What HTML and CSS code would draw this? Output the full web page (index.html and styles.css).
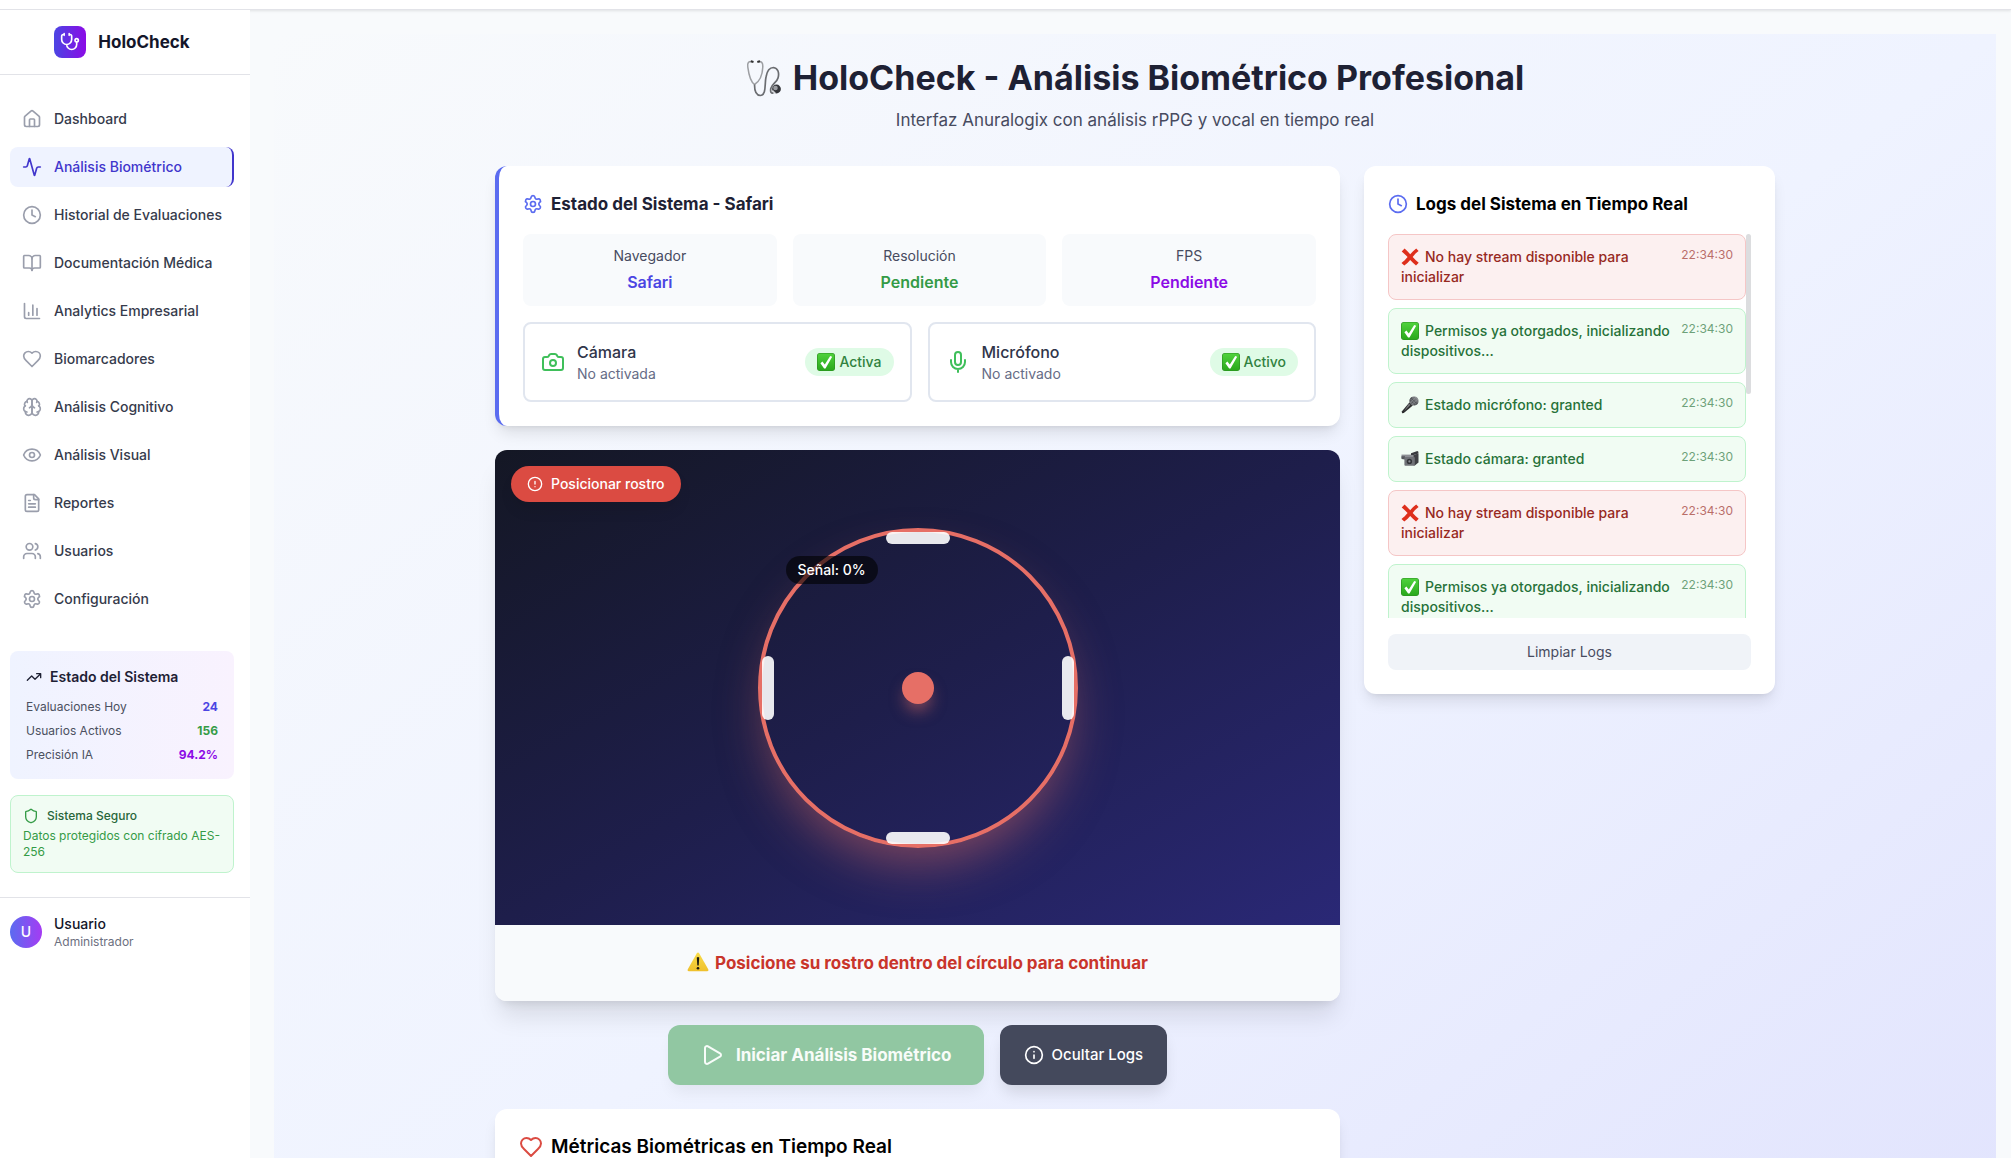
FILE: index.html
```html
<!DOCTYPE html>
<html lang="es">
<head>
<meta charset="utf-8">
<meta name="viewport" content="width=device-width, initial-scale=1">
<title>HoloCheck - Análisis Biométrico Profesional</title>
<link rel="stylesheet" href="styles.css">
</head>
<body>
<svg class="sprite" aria-hidden="true">
  <symbol id="i-steth" viewBox="0 0 24 24"><path d="M11 2v2M5 2v2M5 3H4a2 2 0 0 0-2 2v4a6 6 0 0 0 12 0V5a2 2 0 0 0-2-2h-1M8 15a6 6 0 0 0 12 0v-3"/><circle cx="20" cy="10" r="2"/></symbol>
  <symbol id="i-home" viewBox="0 0 24 24"><path d="M15 21v-8a1 1 0 0 0-1-1h-4a1 1 0 0 0-1 1v8"/><path d="M3 10a2 2 0 0 1 .709-1.528l7-5.999a2 2 0 0 1 2.582 0l7 5.999A2 2 0 0 1 21 10v9a2 2 0 0 1-2 2H5a2 2 0 0 1-2-2z"/></symbol>
  <symbol id="i-activity" viewBox="0 0 24 24"><path d="M22 12h-2.48a2 2 0 0 0-1.93 1.46l-2.35 8.36a.25.25 0 0 1-.48 0L9.24 2.18a.25.25 0 0 0-.48 0l-2.35 8.36A2 2 0 0 1 4.49 12H2"/></symbol>
  <symbol id="i-clock" viewBox="0 0 24 24"><circle cx="12" cy="12" r="10"/><path d="M12 6v6l4 2"/></symbol>
  <symbol id="i-book" viewBox="0 0 24 24"><path d="M12 7v14"/><path d="M3 18a1 1 0 0 1-1-1V4a1 1 0 0 1 1-1h5a4 4 0 0 1 4 4 4 4 0 0 1 4-4h5a1 1 0 0 1 1 1v13a1 1 0 0 1-1 1h-6a3 3 0 0 0-3 3 3 3 0 0 0-3-3z"/></symbol>
  <symbol id="i-chart" viewBox="0 0 24 24"><path d="M3 3v16a2 2 0 0 0 2 2h16M18 17V9M13 17V5M8 17v-3"/></symbol>
  <symbol id="i-heart" viewBox="0 0 24 24"><path d="M19 14c1.49-1.46 3-3.21 3-5.5A5.5 5.5 0 0 0 16.5 3c-1.76 0-3 .5-4.5 2-1.5-1.5-2.74-2-4.5-2A5.5 5.5 0 0 0 2 8.5c0 2.3 1.5 4.05 3 5.5l7 7Z"/></symbol>
  <symbol id="i-brain" viewBox="0 0 24 24"><path d="M12 5a3 3 0 1 0-5.997.125 4 4 0 0 0-2.526 5.77 4 4 0 0 0 .556 6.588A4 4 0 1 0 12 18Z"/><path d="M12 5a3 3 0 1 1 5.997.125 4 4 0 0 1 2.526 5.77 4 4 0 0 1-.556 6.588A4 4 0 1 1 12 18Z"/><path d="M15 13a4.5 4.5 0 0 1-3-4 4.5 4.5 0 0 1-3 4M17.599 6.5a3 3 0 0 0 .399-1.375M6.003 5.125A3 3 0 0 0 6.401 6.5M3.477 10.896a4 4 0 0 1 .585-.396M19.938 10.5a4 4 0 0 1 .585.396M6 18a4 4 0 0 1-1.967-.516M19.967 17.484A4 4 0 0 1 18 18"/></symbol>
  <symbol id="i-eye" viewBox="0 0 24 24"><path d="M2.062 12.348a1 1 0 0 1 0-.696 10.75 10.75 0 0 1 19.876 0 1 1 0 0 1 0 .696 10.75 10.75 0 0 1-19.876 0"/><circle cx="12" cy="12" r="3"/></symbol>
  <symbol id="i-file" viewBox="0 0 24 24"><path d="M15 2H6a2 2 0 0 0-2 2v16a2 2 0 0 0 2 2h12a2 2 0 0 0 2-2V7Z"/><path d="M14 2v4a2 2 0 0 0 2 2h4M10 9H8M16 13H8M16 17H8"/></symbol>
  <symbol id="i-users" viewBox="0 0 24 24"><path d="M16 21v-2a4 4 0 0 0-4-4H6a4 4 0 0 0-4 4v2"/><circle cx="9" cy="7" r="4"/><path d="M22 21v-2a4 4 0 0 0-3-3.87M16 3.128a4 4 0 0 1 0 7.744"/></symbol>
  <symbol id="i-gear" viewBox="0 0 24 24"><path d="M9.671 4.136a2.34 2.34 0 0 1 4.659 0 2.34 2.34 0 0 0 3.319 1.915 2.34 2.34 0 0 1 2.33 4.033 2.34 2.34 0 0 0 0 3.831 2.34 2.34 0 0 1-2.33 4.033 2.34 2.34 0 0 0-3.319 1.915 2.34 2.34 0 0 1-4.659 0 2.34 2.34 0 0 0-3.32-1.915 2.34 2.34 0 0 1-2.33-4.033 2.34 2.34 0 0 0 0-3.831A2.34 2.34 0 0 1 6.35 6.051a2.34 2.34 0 0 0 3.319-1.915"/><circle cx="12" cy="12" r="3"/></symbol>
  <symbol id="i-trend" viewBox="0 0 24 24"><path d="M16 7h6v6M22 7l-8.500 8.500-5-5L2 17"/></symbol>
  <symbol id="i-shield" viewBox="0 0 24 24"><path d="M20 13c0 5-3.500 7.500-7.660 8.950a1 1 0 0 1-.67-.01C7.500 20.500 4 18 4 13V6a1 1 0 0 1 1-1c2 0 4.500-1.200 6.240-2.720a1.170 1.170 0 0 1 1.520 0C14.510 3.810 17 5 19 5a1 1 0 0 1 1 1z"/></symbol>
  <symbol id="i-camera" viewBox="0 0 24 24"><path d="M13.997 4a2 2 0 0 1 1.760 1.050l.486.900A2 2 0 0 0 18.003 7H20a2 2 0 0 1 2 2v9a2 2 0 0 1-2 2H4a2 2 0 0 1-2-2V9a2 2 0 0 1 2-2h1.997a2 2 0 0 0 1.759-1.048l.489-.904A2 2 0 0 1 10.004 4z"/><circle cx="12" cy="13" r="3"/></symbol>
  <symbol id="i-mic" viewBox="0 0 24 24"><path d="M12 19v3M19 10v2a7 7 0 0 1-14 0v-2"/><rect x="9" y="2" width="6" height="13" rx="3"/></symbol>
  <symbol id="i-alert" viewBox="0 0 24 24"><circle cx="12" cy="12" r="10"/><path d="M12 8v4M12 16h.01"/></symbol>
  <symbol id="i-info" viewBox="0 0 24 24"><circle cx="12" cy="12" r="10"/><path d="M12 16v-4M12 8h.01"/></symbol>
  <symbol id="i-play" viewBox="0 0 24 24"><path d="M5 5a2 2 0 0 1 3.008-1.728l11.997 6.998a2 2 0 0 1 .003 3.458l-12 7A2 2 0 0 1 5 19z"/></symbol>

  <linearGradient id="g-check" x1="0" y1="0" x2="0" y2="1"><stop offset="0" stop-color="#4fd23c"/><stop offset="1" stop-color="#2aa81c"/></linearGradient>
  <linearGradient id="g-warn" x1="0" y1="0" x2="0" y2="1"><stop offset="0" stop-color="#f8dc4a"/><stop offset="1" stop-color="#efc02c"/></linearGradient>
  <symbol id="e-check" viewBox="0 0 18 18"><rect width="18" height="18" rx="3" fill="#2b8f20"/><rect x=".6" y=".6" width="16.800" height="16.800" rx="2.600" fill="url(#g-check)"/><path d="M3.400 10.200L5.400 8.600L7.800 11.600L13.200 3L15.200 3.800L8.500 15.400H7.100Z" fill="#fff"/></symbol>
  <symbol id="e-cross" viewBox="0 0 18 18"><path d="M3.600.6C5.600 2.400 7.400 4.300 9.200 6.200C11 4.100 13 2.100 15.200.5L17.600 3C15.200 4.700 13.400 6.700 11.700 9C13.600 11 15.400 12.900 17.700 14.700L15 17.500C12.800 15.600 11 13.800 9.200 11.900C7.400 14 5.600 15.900 3.300 17.600L.5 15.100C2.900 13.300 4.800 11.300 6.600 9.100C4.800 7.100 2.900 5.200.7 3.500Z" fill="#de2f1c"/></symbol>
  <symbol id="e-mic" viewBox="0 0 18 18"><path d="M8.600 6.200L11.800 9.600L2.800 17L1 17.200L.8 15.600Z" fill="#2c2c2e"/><path d="M8 7.600L9.400 9L3 15.200Z" fill="#77787c"/><circle cx="13" cy="5" r="4.600" fill="#77797d"/><path d="M9.400 7.200a4.600 4.600 0 0 0 7.900-.4L10.800 1a4.600 4.600 0 0 0-1.400 6.200Z" fill="#55575b"/><path d="M11 1.600l5.600 5.200M9.600 3l5.600 5.600M14 .8l3 3M9 5.400l3.600 3.600M16.800 3l-6 5.600M15.200 1.200L9.200 6.800" stroke="#a2a4a8" stroke-width=".5"/></symbol>
  <symbol id="e-video" viewBox="0 0 18 18"><path d="M.5 4.600H13V8H.5Z" fill="#8d8f94"/><path d="M.5 6.200H4V9.600L.5 9Z" fill="#55575b"/><path d="M10 3.200L16.400 1l1 .8V3.400L12.600 5H10Z" fill="#3a3b3f"/><path d="M12.600 4.800L17.500 3.600V12.600L13.800 15.600H12.600Z" fill="#3f4044"/><rect x="3.400" y="7" width="10.400" height="8.800" rx="1" fill="#707277"/><circle cx="8.400" cy="11.400" r="2.700" fill="#333438"/><circle cx="8.400" cy="11.400" r="1.100" fill="#8b8d93"/></symbol>
  <symbol id="e-warn" viewBox="0 0 22 20"><path d="M9.700 1.500Q11-.4 12.300 1.500L21.200 17.200Q22 19.200 20 19.300H2Q0 19.200.8 17.200Z" fill="url(#g-warn)"/><path d="M9.800 5.600Q11 4.200 12.200 5.600L11.700 13.400H10.300Z" fill="#1c1a12"/><circle cx="11" cy="16.200" r="1.300" fill="#1c1a12"/></symbol>
  <symbol id="e-steth" viewBox="0 0 36 38"><path d="M6 2.500C2.500 2 1.200 4 1.800 8C2.600 14 3.500 22 8.500 25.500C14.500 22 16.500 14 16.800 8C17 4 15.500 2 12.500 2.500" fill="none" stroke="#9d9fa3" stroke-width="1.500"/><path d="M8.500 25.500C8.500 31 10 36.500 14.500 36.500C20.500 36 18.500 25 20 18C21 12 23.500 8.500 27.500 8.500C32 9 33.500 14 32 19C31 23 26 25 24.800 29.500C24.200 33 25 34.500 27.500 34" fill="none" stroke="#6b6d71" stroke-width="1.700"/><path d="M4.800 2.300l2.700.7M14 2.300l-2.700.7" stroke="#333" stroke-width="2.200"/><circle cx="30.500" cy="30" r="4.400" fill="#34353a"/><circle cx="29.500" cy="29" r="2.300" fill="#9a9ca1"/><path d="M26.500 31.500l3 3" stroke="#d0d2d6" stroke-width="1.200"/></symbol>
</svg>

<header class="topbar"></header>
<div class="shell">
  <aside class="sidebar">
    <div class="brand">
      <span class="brand-mark"><svg class="icon icon-20"><use href="#i-steth"/></svg></span>
      <span class="brand-name">HoloCheck</span>
    </div>
    <nav class="nav">
      <a class="nav-link" href="#dashboard"><svg class="icon icon-20"><use href="#i-home"/></svg>Dashboard</a>
      <a class="nav-link nav-link-active" href="#biometrico" aria-current="page"><svg class="icon icon-20"><use href="#i-activity"/></svg>Análisis Biométrico</a>
      <a class="nav-link" href="#historial"><svg class="icon icon-20"><use href="#i-clock"/></svg>Historial de Evaluaciones</a>
      <a class="nav-link" href="#documentacion"><svg class="icon icon-20"><use href="#i-book"/></svg>Documentación Médica</a>
      <a class="nav-link" href="#analytics"><svg class="icon icon-20"><use href="#i-chart"/></svg>Analytics Empresarial</a>
      <a class="nav-link" href="#biomarcadores"><svg class="icon icon-20"><use href="#i-heart"/></svg>Biomarcadores</a>
      <a class="nav-link" href="#cognitivo"><svg class="icon icon-20"><use href="#i-brain"/></svg>Análisis Cognitivo</a>
      <a class="nav-link" href="#visual"><svg class="icon icon-20"><use href="#i-eye"/></svg>Análisis Visual</a>
      <a class="nav-link" href="#reportes"><svg class="icon icon-20"><use href="#i-file"/></svg>Reportes</a>
      <a class="nav-link" href="#usuarios"><svg class="icon icon-20"><use href="#i-users"/></svg>Usuarios</a>
      <a class="nav-link" href="#configuracion"><svg class="icon icon-20"><use href="#i-gear"/></svg>Configuración</a>
    </nav>
    <section class="summary">
      <h2 class="summary-title"><svg class="icon icon-16"><use href="#i-trend"/></svg>Estado del Sistema</h2>
      <dl class="summary-list">
        <div class="summary-row"><dt>Evaluaciones Hoy</dt><dd class="indigo">24</dd></div>
        <div class="summary-row"><dt>Usuarios Activos</dt><dd class="green">156</dd></div>
        <div class="summary-row"><dt>Precisión IA</dt><dd class="purple">94.2%</dd></div>
      </dl>
    </section>
    <section class="secure">
      <h2 class="secure-title"><svg class="icon icon-16"><use href="#i-shield"/></svg>Sistema Seguro</h2>
      <p class="secure-text">Datos protegidos con cifrado AES-256</p>
    </section>
    <div class="user">
      <span class="avatar">U</span>
      <div>
        <p class="user-name">Usuario</p>
        <p class="user-role">Administrador</p>
      </div>
    </div>
  </aside>

  <main class="main">
    <div class="canvas">
      <header class="page-head">
        <h1 class="page-title"><svg class="emoji emoji-title"><use href="#e-steth"/></svg>HoloCheck - Análisis Biométrico Profesional</h1>
        <p class="page-sub">Interfaz Anuralogix con análisis rPPG y vocal en tiempo real</p>
      </header>
      <div class="columns">
        <div class="primary">
          <section class="card status-card">
            <h2 class="card-title"><svg class="icon icon-20 accent"><use href="#i-gear"/></svg>Estado del Sistema - Safari</h2>
            <div class="tiles">
              <div class="tile"><p class="tile-label">Navegador</p><p class="tile-value indigo">Safari</p></div>
              <div class="tile"><p class="tile-label">Resolución</p><p class="tile-value green">Pendiente</p></div>
              <div class="tile"><p class="tile-label">FPS</p><p class="tile-value purple">Pendiente</p></div>
            </div>
            <div class="devices">
              <div class="device">
                <svg class="icon icon-24 live"><use href="#i-camera"/></svg>
                <div class="device-text"><p class="device-name">Cámara</p><p class="device-state">No activada</p></div>
                <span class="chip"><svg class="emoji"><use href="#e-check"/></svg>Activa</span>
              </div>
              <div class="device">
                <svg class="icon icon-24 live"><use href="#i-mic"/></svg>
                <div class="device-text"><p class="device-name">Micrófono</p><p class="device-state">No activado</p></div>
                <span class="chip"><svg class="emoji"><use href="#e-check"/></svg>Activo</span>
              </div>
            </div>
          </section>

          <section class="card video-card">
            <div class="video">
              <span class="face-badge"><svg class="icon icon-16"><use href="#i-alert"/></svg>Posicionar rostro</span>
              <div class="ring">
                <span class="tick tick-top"></span>
                <span class="tick tick-bottom"></span>
                <span class="tick tick-left"></span>
                <span class="tick tick-right"></span>
                <span class="dot"></span>
                <span class="signal">Señal: 0%</span>
              </div>
            </div>
            <p class="notice"><svg class="emoji emoji-warn"><use href="#e-warn"/></svg>Posicione su rostro dentro del círculo para continuar</p>
          </section>

          <div class="actions">
            <button class="btn btn-start" type="button" disabled><svg class="icon icon-24"><use href="#i-play"/></svg>Iniciar Análisis Biométrico</button>
            <button class="btn btn-logs" type="button"><svg class="icon icon-20"><use href="#i-info"/></svg>Ocultar Logs</button>
          </div>

          <section class="card metrics-card">
            <h2 class="card-title metrics-title"><svg class="icon icon-24 red"><use href="#i-heart"/></svg>Métricas Biométricas en Tiempo Real</h2>
          </section>
        </div>

        <aside class="card logs-card">
          <h2 class="card-title black"><svg class="icon icon-20 accent"><use href="#i-clock"/></svg>Logs del Sistema en Tiempo Real</h2>
          <div class="log-frame">
            <ul class="log-list">
              <li class="log log-error"><p class="log-text"><svg class="emoji"><use href="#e-cross"/></svg>No hay stream disponible para inicializar</p><time class="log-time">22:34:30</time></li>
              <li class="log log-ok"><p class="log-text"><svg class="emoji"><use href="#e-check"/></svg>Permisos ya otorgados, inicializando dispositivos...</p><time class="log-time">22:34:30</time></li>
              <li class="log log-ok"><p class="log-text"><svg class="emoji"><use href="#e-mic"/></svg>Estado micrófono: granted</p><time class="log-time">22:34:30</time></li>
              <li class="log log-ok"><p class="log-text"><svg class="emoji"><use href="#e-video"/></svg>Estado cámara: granted</p><time class="log-time">22:34:30</time></li>
              <li class="log log-error"><p class="log-text"><svg class="emoji"><use href="#e-cross"/></svg>No hay stream disponible para inicializar</p><time class="log-time">22:34:30</time></li>
              <li class="log log-ok"><p class="log-text"><svg class="emoji"><use href="#e-check"/></svg>Permisos ya otorgados, inicializando dispositivos...</p><time class="log-time">22:34:30</time></li>
            </ul>
            <span class="log-thumb"></span>
          </div>
          <button class="btn-clear" type="button">Limpiar Logs</button>
        </aside>
      </div>
    </div>
  </main>
</div>
</body>
</html>
```

FILE: styles.css
```css
*, *::before, *::after { box-sizing: border-box; }
body, h1, h2, p, ul, dl, dd { margin: 0; padding: 0; }
ul { list-style: none; }
a { color: inherit; text-decoration: none; }
button { border: 0; font: inherit; cursor: pointer; }

body {
  display: flex;
  flex-direction: column;
  height: 100vh;
  overflow: hidden;
  background: #f8fafc;
  color: #1e2134;
  font-family: Inter, "Liberation Sans", sans-serif;
  font-size: 14px;
  line-height: 20px;
}

.sprite { position: absolute; width: 0; height: 0; }
.icon { flex: none; fill: none; stroke: currentColor; stroke-width: 2; stroke-linecap: round; stroke-linejoin: round; }
.icon-16 { width: 16px; height: 16px; }
.icon-20 { width: 20px; height: 20px; }
.icon-24 { width: 24px; height: 24px; }
.emoji { display: inline-block; width: 18px; height: 18px; margin-right: 6px; vertical-align: -4px; }

.indigo { color: #4b45e3; }
.green { color: #349b46; }
.purple { color: #8b0be6; }
.accent { color: #5b6cf0; }
.live { color: #3fbf5a; }
.red { color: #db4b42; }

.topbar { flex: none; height: 10px; background: #fff; border-bottom: 1px solid #e2e3e8; box-shadow: 0 1px 3px rgba(0, 0, 0, .1); }
.shell { display: flex; flex: 1; min-height: 0; }

/* Sidebar */
.sidebar { position: relative; flex: none; width: 250px; overflow-y: auto; background: #fff; }
.brand { display: flex; align-items: center; justify-content: center; gap: 12px; height: 65px; padding-right: 6px; border-bottom: 1px solid #e2e3e8; }
.brand-mark { display: grid; place-items: center; width: 32px; height: 32px; border-radius: 8px; background: linear-gradient(90deg, #4b45e3, #8b0be6); color: #fff; }
.brand-name { font-size: 17px; font-weight: 700; line-height: 28px; color: #14162a; }
.nav { display: flex; flex-direction: column; gap: 8px; padding: 24px 16px 32px 10px; }
.nav-link { display: flex; align-items: center; gap: 12px; height: 40px; padding: 0 12px; border-radius: 8px; color: #363b4c; font-size: 14px; font-weight: 500; white-space: nowrap; }
.nav-link .icon { color: #9a9eac; }
.nav-link-active { background: #eff3ff; border-right: 2px solid #4136cc; color: #4136cc; }
.nav-link-active .icon { color: #4136cc; }

.summary { margin: 0 16px 16px 10px; padding: 16px; border-radius: 8px; background: linear-gradient(90deg, #eff3ff, #f9f2fe); }
.summary-title { display: flex; align-items: center; gap: 8px; margin-bottom: 12px; font-size: 14px; font-weight: 600; line-height: 20px; }
.summary-list { display: flex; flex-direction: column; gap: 8px; font-size: 12px; line-height: 16px; }
.summary-row { display: flex; justify-content: space-between; }
.summary-row dt { color: #4b5060; }
.summary-row dd { font-weight: 700; }
.secure { margin: 0 16px 24px 10px; padding: 12px; border: 1px solid #bff3cd; border-radius: 8px; background: #f1fcf3; font-size: 12px; line-height: 16px; }
.secure-title { display: flex; align-items: center; gap: 8px; margin-bottom: 4px; color: #28663a; font-size: 12px; font-weight: 500; line-height: 16px; }
.secure-title .icon { color: #349b46; }
.secure-text { color: #349b46; }
.user { display: flex; align-items: center; gap: 12px; padding: 16px 10px; border-top: 1px solid #e2e3e8; }
.avatar { display: grid; place-items: center; width: 32px; height: 32px; border-radius: 50%; background: linear-gradient(90deg, #5b6cf0, #a53bf3); color: #fff; font-weight: 500; }
.user-name { color: #14162a; font-weight: 500; }
.user-role { color: #6c7080; font-size: 12px; line-height: 16px; }

/* Page */
.main { flex: 1; min-width: 0; overflow-y: auto; scrollbar-width: none; padding: 24px 15px 24px 24px; }
.canvas { padding: 24px; background: linear-gradient(to bottom right, #f8fafc, #eff3ff 50%, #e0e2fd); }
.page-head { margin-bottom: 32px; text-align: center; }
.page-title { margin-bottom: 8px; font-size: 34px; font-weight: 700; line-height: 40px; }
.emoji-title { width: 36px; height: 38px; margin-right: 11px; vertical-align: -7px; }
.page-sub { color: #474b60; font-size: 17px; line-height: 28px; }
.columns { display: grid; grid-template-columns: minmax(0, 845fr) minmax(0, 411fr); align-items: start; gap: 24px; max-width: 1280px; margin: 0 auto; }
.primary { display: flex; flex-direction: column; gap: 24px; }

.card { border-radius: 12px; background: #fff; padding: 24px; box-shadow: 0 10px 15px -3px rgba(0, 0, 0, .1), 0 4px 6px -4px rgba(0, 0, 0, .1); }
.card-title { display: flex; align-items: center; gap: 8px; margin-bottom: 16px; font-size: 17px; font-weight: 700; line-height: 28px; }
.black { color: #000; }

.status-card { border-left: 4px solid #5b6cf0; }
.tiles { display: grid; grid-template-columns: repeat(3, 1fr); gap: 16px; margin-bottom: 16px; }
.tile { padding: 12px; border-radius: 8px; background: #f8fafc; text-align: center; }
.tile-label { margin-bottom: 4px; color: #474b60; }
.tile-value { font-size: 16px; font-weight: 600; line-height: 24px; }
.devices { display: grid; grid-template-columns: repeat(2, 1fr); gap: 16px; }
.device { display: flex; align-items: center; gap: 12px; padding: 16px; border: 2px solid #e1e6ef; border-radius: 8px; }
.device-text { flex: 1; }
.device-name { color: #30354a; font-size: 16px; font-weight: 500; line-height: 24px; }
.device-state { color: #666c86; }
.chip { padding: 4px 12px; border-radius: 14px; background: #dffbe6; color: #318240; font-weight: 500; }
.chip .emoji { margin-right: 4px; }

.video-card { padding: 0; overflow: hidden; box-shadow: 0 20px 25px -5px rgba(0, 0, 0, .1), 0 8px 10px -6px rgba(0, 0, 0, .1); }
.video { position: relative; display: grid; place-items: center; aspect-ratio: 16 / 9; background: linear-gradient(to bottom right, #141724, #1e1e4b 50%, #2a2876); }
.face-badge { position: absolute; top: 16px; left: 16px; display: flex; align-items: center; gap: 8px; padding: 8px 16px; border-radius: 18px; background: #db4b42; color: #fff; font-weight: 500; box-shadow: 0 10px 15px -3px rgba(0, 0, 0, .1); }
.ring { position: relative; width: 320px; height: 320px; border: 4px solid #e66f66; border-radius: 50%; box-shadow: 0 25px 50px -12px rgba(230, 111, 102, .5); }
.tick { position: absolute; border-radius: 6px; background: rgba(255, 255, 255, .9); }
.tick-top, .tick-bottom { left: calc(50% - 32px); width: 64px; height: 12px; }
.tick-left, .tick-right { top: calc(50% - 32px); width: 12px; height: 64px; }
.tick-top { top: 0; }
.tick-bottom { bottom: 0; }
.tick-left { left: 0; }
.tick-right { right: 0; }
.dot { position: absolute; top: calc(50% - 16px); left: calc(50% - 16px); width: 32px; height: 32px; border-radius: 50%; background: #e66f66; box-shadow: 0 10px 15px -3px rgba(230, 111, 102, .5); }
.signal { position: absolute; top: 24px; left: 24px; padding: 4px 12px; border-radius: 14px; background: rgba(0, 0, 0, .6); color: #fff; font-weight: 500; white-space: nowrap; }
.notice { padding: 24px; background: #f8fafc; color: #c9352b; font-size: 17px; font-weight: 700; line-height: 28px; text-align: center; }
.emoji-warn { width: 22px; height: 20px; vertical-align: -3px; }

.actions { display: flex; justify-content: center; gap: 16px; }
.btn { display: flex; align-items: center; height: 60px; border-radius: 12px; color: #fff; }
.btn-start { gap: 12px; padding: 0 32px; background: #91c7a2; color: #f8fcf9; font-size: 17px; font-weight: 700; box-shadow: 0 10px 15px -3px rgba(0, 0, 0, .06); }
.btn-logs { gap: 8px; padding: 0 24px; background: #44495c; font-size: 15px; font-weight: 500; box-shadow: 0 10px 15px -3px rgba(0, 0, 0, .12); }
.metrics-card { padding-bottom: 160px; }
.metrics-title { color: #000; font-size: 19px; font-weight: 600; }

.log-frame { position: relative; margin-bottom: 16px; }
.log-list { display: flex; flex-direction: column; gap: 8px; max-height: 384px; overflow-y: auto; scrollbar-width: none; padding-right: 5px; }
.log-thumb { position: absolute; top: 0; right: 0; width: 5px; height: 160px; border-radius: 3px; background: #dcdddf; }
.log { display: flex; flex: none; align-items: flex-start; justify-content: space-between; gap: 8px; padding: 12px; border: 1px solid; border-radius: 8px; }
.log-text { font-weight: 500; }
.log-time { font-size: 12px; line-height: 16px; opacity: .65; }
.log-error { background: #fcf0f0; border-color: #f5c6c6; color: #97291f; }
.log-ok { background: #f1fcf3; border-color: #bff3cd; color: #277239; }
.btn-clear { display: block; width: 100%; height: 36px; border-radius: 8px; background: #f0f3f8; color: #474b60; }
```
